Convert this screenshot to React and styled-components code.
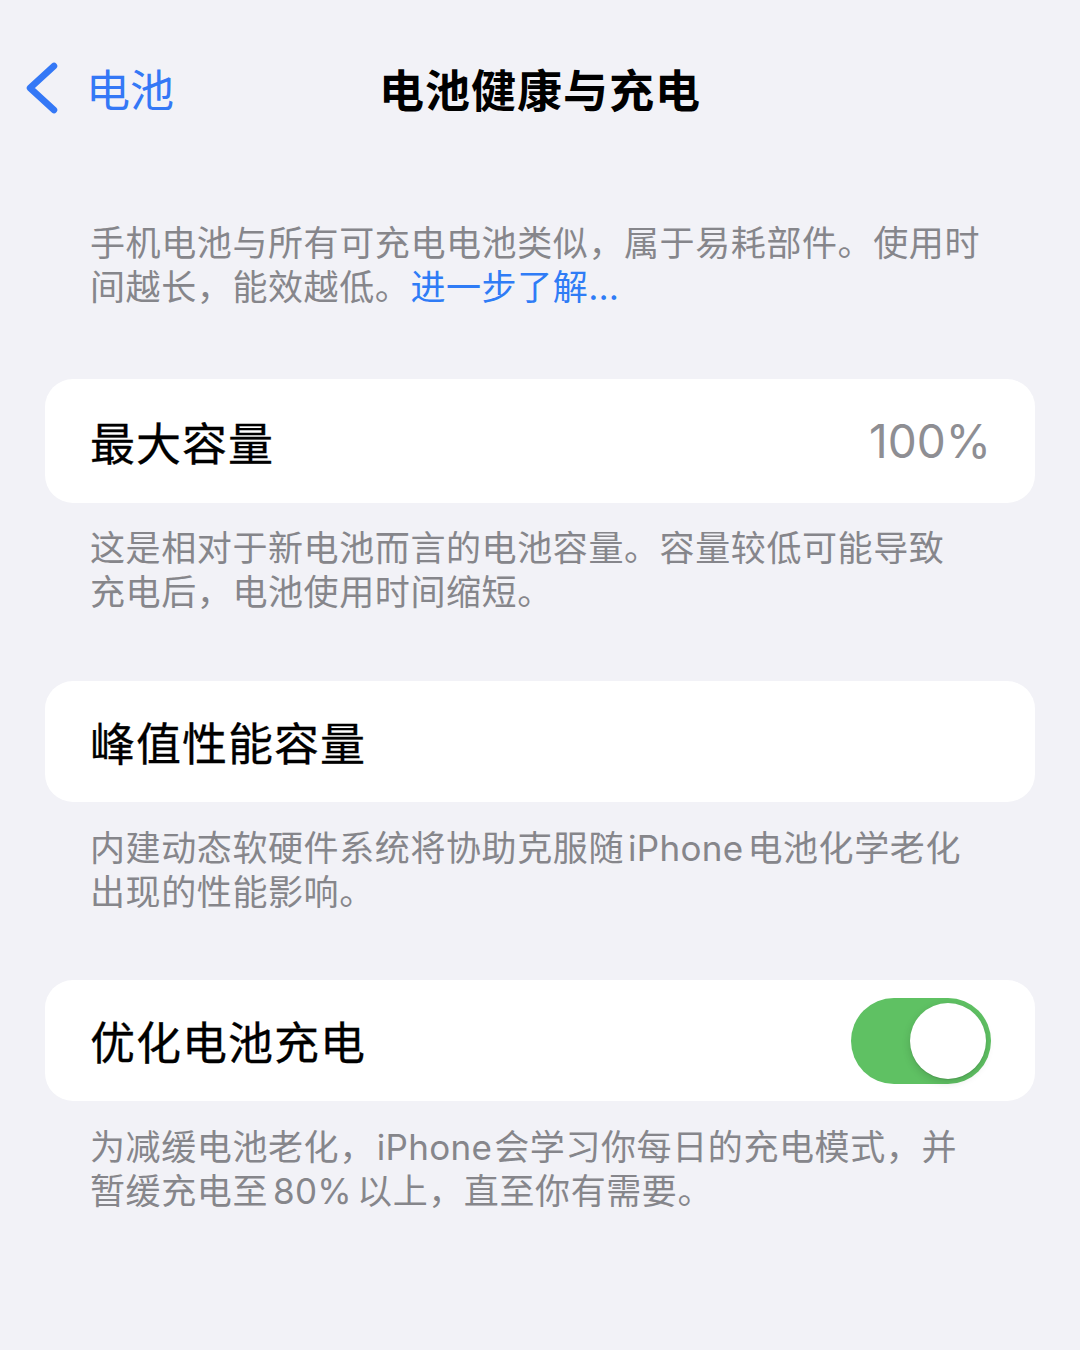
import React from "react";
import styled, { createGlobalStyle } from "styled-components";

const GlobalStyle = createGlobalStyle`
  html, body {
    margin: 0;
    padding: 0;
    background: #f2f2f7;
  }
  body {
    font-family: "Noto Sans CJK SC", "Noto Sans", sans-serif;
    -webkit-font-smoothing: antialiased;
  }
`;

const Page = styled.div`
  width: 1080px;
  min-height: 1350px;
  background: #f2f2f7;
  box-sizing: border-box;
`;

const NavBar = styled.header`
  display: grid;
  grid-template-columns: 1fr auto 1fr;
  align-items: center;
  height: 100px;
  margin-top: 38px;
  padding: 0 25px;
`;

const BackButton = styled.button`
  display: flex;
  align-items: center;
  gap: 27px;
  justify-self: start;
  border: none;
  background: none;
  padding: 0;
  color: #3478f6;
  font-family: inherit;
  font-size: 44px;
  line-height: 1;
  cursor: pointer;
`;

const Title = styled.h1`
  margin: 0;
  font-size: 45px;
  font-weight: 700;
  color: #000;
  letter-spacing: 1px;
`;

const Content = styled.main`
  padding: 0 45px;
  margin-top: 81px;
`;

const Note = styled.p`
  margin: ${(p) => p.$top || 0}px 0 0;
  padding: 0 45px;
  font-size: 35px;
  line-height: 44px;
  letter-spacing: 0.6px;
  color: #86868b;
`;

const Latin = styled.span`
  font-family: "Inter", "Liberation Sans", sans-serif;
  margin: 0 ${(p) => p.$gap || 6}px;
  letter-spacing: 0.3px;
  line-height: 1;
`;

const Link = styled.a`
  color: #2f7cf6;
  text-decoration: none;
`;

const Card = styled.section`
  display: flex;
  align-items: center;
  justify-content: space-between;
  height: ${(p) => p.$height || 121}px;
  margin-top: ${(p) => p.$top}px;
  padding: 0 44px 0 45px;
  background: #fff;
  border-radius: 28px;
  box-sizing: border-box;
`;

const Label = styled.span`
  font-size: 45px;
  font-weight: 400;
  color: #000;
  letter-spacing: 1px;
  -webkit-text-stroke: 0.3px #000;
`;

const Value = styled.span`
  font-family: "Inter", "Liberation Sans", sans-serif;
  font-size: 46px;
  font-weight: 400;
  color: #8e8e93;
`;

const Switch = styled.span`
  position: relative;
  width: 140px;
  height: 86px;
  border-radius: 43px;
  background: ${(p) => (p.$on ? "#5fc163" : "#e9e9ea")};
  flex-shrink: 0;
`;

const Knob = styled.span`
  position: absolute;
  top: 5px;
  left: ${(p) => (p.$on ? "59px" : "5px")};
  width: 76px;
  height: 76px;
  border-radius: 50%;
  background: #fff;
  box-shadow: 0 3px 8px rgba(0, 0, 0, 0.15), 0 1px 1px rgba(0, 0, 0, 0.1);
`;

const Chevron = () => (
  <svg width="34" height="52" viewBox="0 0 34 52" fill="none">
    <path
      d="M29 4 L5 26 L29 48"
      stroke="#3478f6"
      strokeWidth="6.5"
      strokeLinecap="round"
      strokeLinejoin="round"
    />
  </svg>
);

const App = () => {
  return (
    <Page>
      <GlobalStyle />
      <NavBar>
        <BackButton>
          <Chevron />
          电池
        </BackButton>
        <Title>电池健康与充电</Title>
        <span />
      </NavBar>
      <Content>
        <Note>
          手机电池与所有可充电电池类似，属于易耗部件。使用时
          <br />
          间越长，能效越低。<Link href="#!">进一步了解...</Link>
        </Note>

        <Card $top={72} $height={124}>
          <Label>最大容量</Label>
          <Value>100%</Value>
        </Card>
        <Note $top={21}>
          这是相对于新电池而言的电池容量。容量较低可能导致
          <br />
          充电后，电池使用时间缩短。
        </Note>

        <Card $top={69}>
          <Label>峰值性能容量</Label>
        </Card>
        <Note $top={22}>
          内建动态软硬件系统将协助克服随<Latin $gap={4}>iPhone</Latin>电池化学老化
          <br />
          出现的性能影响。
        </Note>

        <Card $top={68}>
          <Label>优化电池充电</Label>
          <Switch $on>
            <Knob $on />
          </Switch>
        </Card>
        <Note $top={22}>
          为减缓电池老化，<Latin $gap={2}>iPhone</Latin>会学习你每日的充电模式，并
          <br />
          暂缓充电至<Latin $gap={5}>80%</Latin>以上，直至你有需要。
        </Note>
      </Content>
    </Page>
  );
};

export default App;
